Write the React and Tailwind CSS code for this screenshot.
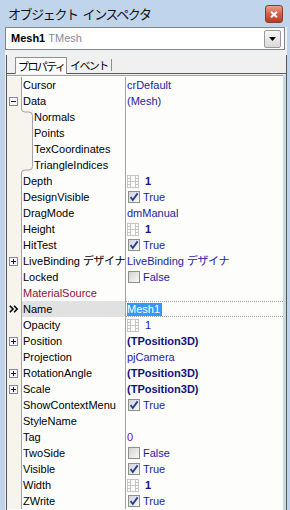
const ROWS = [
  { n: 'Cursor', v: { t: 'text', s: 'crDefault' } },
  { n: 'Data', box: 'minus', v: { t: 'text', s: '(Mesh)' } },
  { n: 'Normals', child: 'first' },
  { n: 'Points', child: 'mid' },
  { n: 'TexCoordinates', child: 'mid' },
  { n: 'TriangleIndices', child: 'last' },
  { n: 'Depth', v: { t: 'film', s: '1', bold: true } },
  { n: 'DesignVisible', v: { t: 'check', on: true } },
  { n: 'DragMode', v: { t: 'text', s: 'dmManual' } },
  { n: 'Height', v: { t: 'film', s: '1', bold: true } },
  { n: 'HitTest', v: { t: 'check', on: true } },
  { n: 'LiveBinding', jp: 'デザイナ', box: 'plus', v: { t: 'jp', s: 'LiveBinding', jp: 'デザイナ' } },
  { n: 'Locked', v: { t: 'check', on: false } },
  { n: 'MaterialSource', red: true },
  { n: 'Name', selected: true, v: { t: 'sel', s: 'Mesh1' } },
  { n: 'Opacity', v: { t: 'film', s: '1' } },
  { n: 'Position', box: 'plus', v: { t: 'bold', s: '(TPosition3D)' } },
  { n: 'Projection', v: { t: 'text', s: 'pjCamera' } },
  { n: 'RotationAngle', box: 'plus', v: { t: 'bold', s: '(TPosition3D)' } },
  { n: 'Scale', box: 'plus', v: { t: 'bold', s: '(TPosition3D)' } },
  { n: 'ShowContextMenu', v: { t: 'check', on: true } },
  { n: 'StyleName' },
  { n: 'Tag', v: { t: 'purple', s: '0' } },
  { n: 'TwoSide', v: { t: 'check', on: false } },
  { n: 'Visible', v: { t: 'check', on: true } },
  { n: 'Width', v: { t: 'film', s: '1', bold: true } },
  { n: 'ZWrite', v: { t: 'check', on: true } },
]

function Film() {
  return (
    <svg width="12" height="13" viewBox="0 0 12 13" fill="none" stroke="#c6c6c6" className="shrink-0">
      <rect x="0.5" y="0.5" width="11" height="12" />
      <path d="M3.5 0.5V12.5M8.5 0.5V12.5M0.5 3.5H3.5M0.5 6.5H3.5M0.5 9.5H3.5M8.5 3.5H11.5M8.5 6.5H11.5M8.5 9.5H11.5M3.5 6.5H8.5" />
    </svg>
  )
}

function Check({ on }) {
  return (
    <svg width="12" height="12" viewBox="0 0 12 12" className="shrink-0">
      <defs>
        <linearGradient id="cbg" x1="0" y1="0" x2="1" y2="1">
          <stop offset="0" stopColor="#d2d2d2" />
          <stop offset="1" stopColor="#fafafa" />
        </linearGradient>
      </defs>
      <rect x="0.5" y="0.5" width="11" height="11" fill="url(#cbg)" stroke="#8e8f8f" />
      {on && <path d="M2.6 6.2L4.8 9L9.6 2.4" fill="none" stroke="#2a3f8f" strokeWidth="1.9" />}
    </svg>
  )
}

function Box({ plus }) {
  return (
    <svg width="9" height="9" viewBox="0 0 9 9" className="shrink-0">
      <rect x="0.5" y="0.5" width="8" height="8" fill="#f4f4f4" stroke="#8c8c8c" />
      <path d={plus ? 'M2 4.5H7M4.5 2V7' : 'M2 4.5H7'} stroke="#1a1a40" />
    </svg>
  )
}

function Chevrons() {
  return (
    <svg width="10" height="8" viewBox="0 0 10 8" className="shrink-0">
      <path d="M0.8 0.8L4 4L0.8 7.2M5 0.8L8.2 4L5 7.2" fill="none" stroke="#000" strokeWidth="1.6" />
    </svg>
  )
}

function Branch({ kind }) {
  const d =
    kind === 'first'
      ? 'M0.5 0Q0.5 3 4 3H8Q11.5 3 11.5 6.5V16'
      : kind === 'last'
        ? 'M11.5 0V9.5Q11.5 13 8 13H4Q0.5 13 0.5 16'
        : 'M11.5 0V16'
  return (
    <svg width="12" height="16" viewBox="0 0 12 16" fill="none" stroke="#a3a3a3">
      <path d={d} />
    </svg>
  )
}

function Value({ v }) {
  if (!v) return null
  if (v.t === 'text') return <span className="text-[#1c1ca8] whitespace-nowrap">{v.s}</span>
  if (v.t === 'jp')
    return (
      <span className="text-[#1c1ca8] whitespace-nowrap">
        {v.s}
        <span className="ml-[3px] tracking-[-0.4px]">{v.jp}</span>
      </span>
    )
  if (v.t === 'bold') return <span className="text-[#12127e] font-bold whitespace-nowrap">{v.s}</span>
  if (v.t === 'purple') return <span className="text-[#6a1090]">{v.s}</span>
  if (v.t === 'sel')
    return <span className="bg-[#3399ff] text-white h-[13px] leading-[13px] pr-[2px]">{v.s}</span>
  if (v.t === 'film')
    return (
      <span className="flex items-center gap-[6px]">
        <Film />
        <span className={v.bold ? 'font-bold text-[#12127e]' : 'text-[#1c1ca8]'}>{v.s}</span>
      </span>
    )
  return (
    <span className="flex items-center gap-[3px] pl-[1px]">
      <Check on={v.on} />
      <span className="text-[#1c1ca8]">{v.on ? 'True' : 'False'}</span>
    </span>
  )
}

function Row({ r }) {
  const nameColor = r.red ? 'text-[#8e1034]' : 'text-black'
  const nameBg = r.selected ? 'bg-[#e1e1e1]' : ''
  return (
    <div className="flex h-[16px] leading-[16px]">
      {r.child ? (
        <>
          <div className="w-[14px] shrink-0 bg-[#f6f4ec]" />
          <div className="w-[12px] shrink-0 bg-[#f6f4ec]">
            <Branch kind={r.child} />
          </div>
          <div className="w-[93px] shrink-0 border-r border-[#a3a3a3] pl-[1px] whitespace-nowrap overflow-hidden">{r.n}</div>
        </>
      ) : (
        <>
          <div className="w-[15px] shrink-0 bg-[#f6f4ec] border-r border-[#a3a3a3] flex items-center pl-[2px]">
            {r.box && <Box plus={r.box === 'plus'} />}
            {r.selected && <Chevrons />}
          </div>
          <div
            className={`w-[104px] shrink-0 border-r border-[#a3a3a3] pl-[1px] whitespace-nowrap overflow-hidden ${nameColor} ${nameBg}`}
          >
            {r.n}
            {r.jp && <span className="ml-[3px] tracking-[-0.4px]">{r.jp}</span>}
          </div>
        </>
      )}
      <div
        className={`flex-1 min-w-0 pl-[1px] flex items-center ${
          r.selected ? 'border-y border-dotted border-[#a0a0a0]' : ''
        }`}
      >
        <Value v={r.v} />
      </div>
    </div>
  )
}

export default function App() {
  return (
    <div className="w-[290px] h-[510px] overflow-hidden bg-[#c0d4ec] flex flex-col font-['Liberation_Sans','Noto_Sans_CJK_JP',sans-serif] text-[11px]">
      <div className="h-[27px] shrink-0 flex items-center justify-between pl-[8px] pr-[7px]">
        <span className="flex gap-[5px] text-[13px] tracking-[-1.4px] text-[#111] font-['Noto_Sans_CJK_JP',sans-serif]">
          <span>オブジェクト</span>
          <span>インスペクタ</span>
        </span>
        <div className="w-[18px] h-[18px] mt-[1px] rounded-[3px] border border-[#8b3b2b] bg-gradient-to-b from-[#e6a08c] via-[#d0604a] to-[#b93a22] flex items-center justify-center">
          <svg width="8" height="7" viewBox="0 0 8 7">
            <path d="M1 0.8L7 6.2M7 0.8L1 6.2" stroke="#fff" strokeWidth="2" />
          </svg>
        </div>
      </div>

      <div className="ml-[5px] w-[282px] flex-1 bg-[#f0f0f0] flex flex-col">
        <div className="w-[280px] h-[23px] shrink-0 bg-white border border-[#7f8790] flex items-center pl-[5px] pr-[3px]">
          <span className="font-bold text-black">Mesh1</span>
          <span className="ml-[3px] text-[#8a8a98]">TMesh</span>
          <div className="ml-auto w-[17px] h-[18px] rounded-[2px] border border-[#9a9a9a] bg-gradient-to-b from-[#f6f6f6] to-[#d9d9d9] flex items-center justify-center">
            <svg width="7" height="4" viewBox="0 0 7 4">
              <path d="M0 0H7L3.5 4Z" fill="#000" />
            </svg>
          </div>
        </div>

        <div className="mt-[5px] ml-[1px] w-[281px] flex-1 border-x border-[#555] flex flex-col">
          <div className="h-[19px] shrink-0 flex font-['Noto_Sans_CJK_JP',sans-serif] text-[11px] tracking-[-1.6px]">
            <div className="w-[8px] border-b border-[#5a5a5a]" />
            <div className="w-[52px] mt-[2px] border-t border-x border-[#8e8f8f] bg-[#fbfbfb] pl-[2px] leading-[16px] text-black">
              プロパティ
            </div>
            <div className="flex-1 border-b border-[#5a5a5a] flex items-start pt-[2px]">
              <span className="pl-[3px] leading-[16px] text-black">イベント</span>
              <div className="ml-[3px] mt-[2px] h-[12px] w-[1px] bg-[#8e8f8f]" />
            </div>
          </div>
          <div className="h-[1px] shrink-0" />
          <div className="flex flex-1">
            <div className="w-[276px] border-t border-[#a3a3a3] bg-[#fdfdfc] pt-[1px]">
              {ROWS.map((r) => (
                <Row key={r.n} r={r} />
              ))}
            </div>
            <div className="flex-1 bg-[#c7d9ef]" />
          </div>
        </div>
      </div>
    </div>
  )
}
